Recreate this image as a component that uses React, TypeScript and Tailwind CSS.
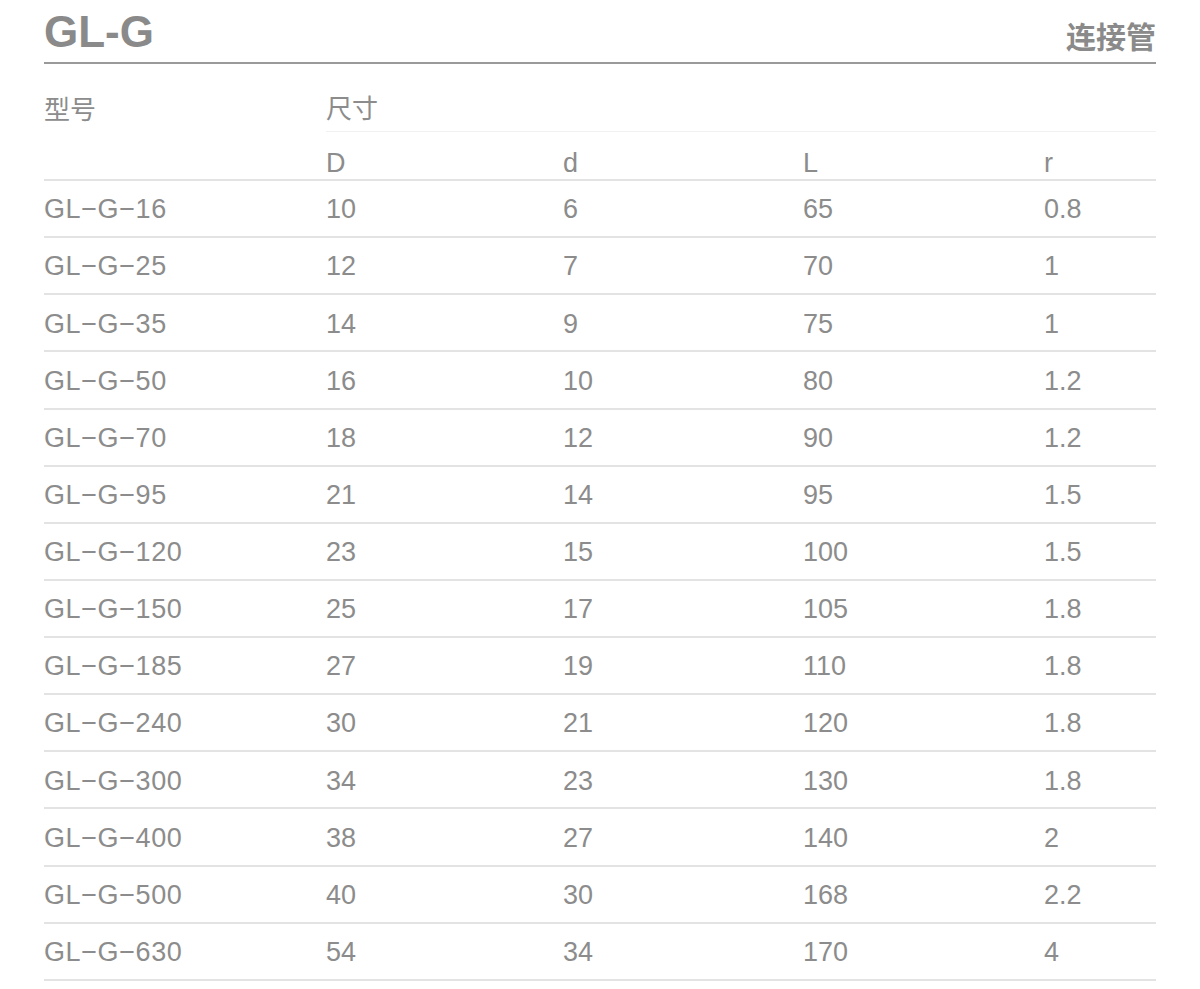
const rows: [string, string, string, string, string][] = [
  ['GL−G−16', '10', '6', '65', '0.8'],
  ['GL−G−25', '12', '7', '70', '1'],
  ['GL−G−35', '14', '9', '75', '1'],
  ['GL−G−50', '16', '10', '80', '1.2'],
  ['GL−G−70', '18', '12', '90', '1.2'],
  ['GL−G−95', '21', '14', '95', '1.5'],
  ['GL−G−120', '23', '15', '100', '1.5'],
  ['GL−G−150', '25', '17', '105', '1.8'],
  ['GL−G−185', '27', '19', '110', '1.8'],
  ['GL−G−240', '30', '21', '120', '1.8'],
  ['GL−G−300', '34', '23', '130', '1.8'],
  ['GL−G−400', '38', '27', '140', '2'],
  ['GL−G−500', '40', '30', '168', '2.2'],
  ['GL−G−630', '54', '34', '170', '4'],
];

const font = { fontFamily: '"Liberation Sans", Arial, "Noto Sans CJK SC", sans-serif' };

export default function App() {
  return (
    <div className="min-h-screen bg-white px-[44px] pt-[8px]" style={font}>
      {/* 标题 */}
      <div className="flex items-end justify-between border-b-2 border-[#9a9a9a] pb-[6px]">
        <h1 className="text-[44px] leading-[48px] font-bold text-[#8a8a8a]">GL-G</h1>
        <span className="text-[30px] leading-[36px] font-bold text-[#8a8a8a]">连接管</span>
      </div>

      {/* 表头 */}
      <div className="flex h-[68px] text-[26px] text-[#8c8c8c]">
        <div className="flex w-[282px] items-center pt-[24px]">型号</div>
        <div className="flex flex-1 items-center border-b border-[#f1f1f1] pt-[24px]">尺寸</div>
      </div>
      <div className="flex h-[49px] items-end border-b-2 border-[#e3e3e3] pb-[3px] text-[27px] leading-[26px] text-[#8c8c8c]">
        <div className="w-[282px]" />
        <div className="w-[237px]">D</div>
        <div className="w-[240px]">d</div>
        <div className="w-[241px]">L</div>
        <div className="flex-1">r</div>
      </div>

      {/* 数据 */}
      {rows.map(([model, D, d, L, r]) => (
        <div
          key={model}
          className="flex h-[57.14px] items-center border-b-2 border-[#e3e3e3] pt-[2px] text-[27px] text-[#8c8c8c]"
        >
          <div className="w-[282px] tracking-[0.6px]">{model}</div>
          <div className="w-[237px]">{D}</div>
          <div className="w-[240px]">{d}</div>
          <div className="w-[241px]">{L}</div>
          <div className="flex-1">{r}</div>
        </div>
      ))}
    </div>
  );
}
